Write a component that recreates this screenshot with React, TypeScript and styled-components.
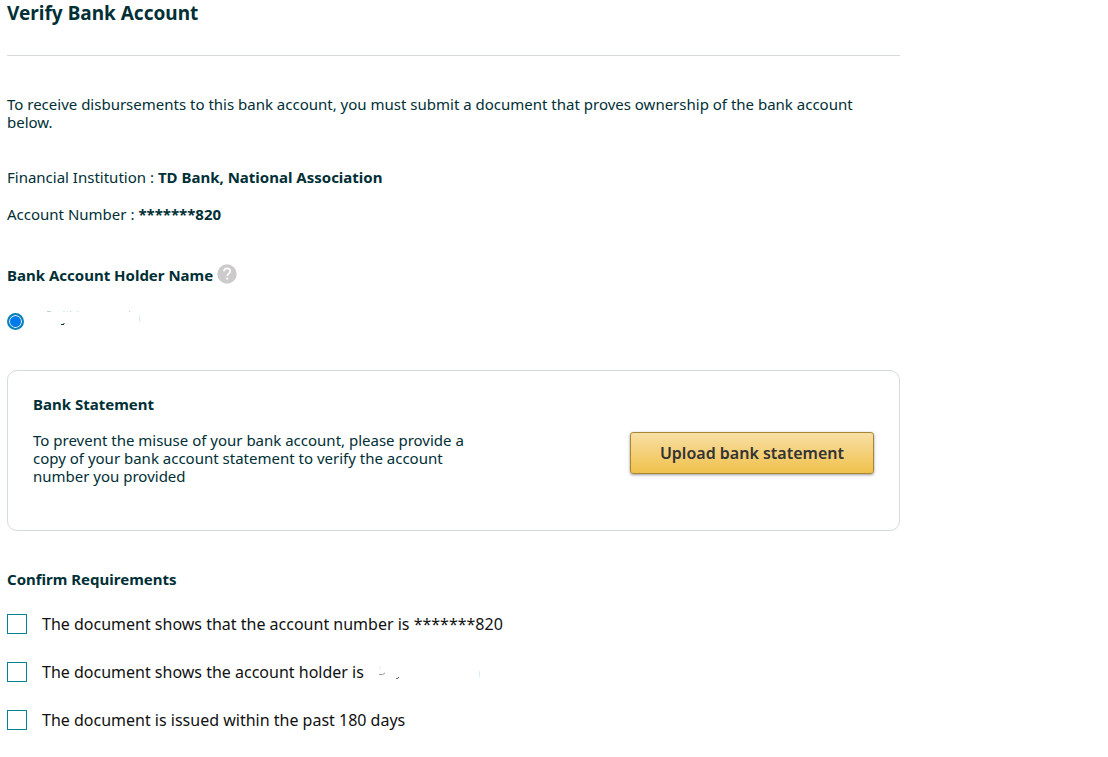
import React from "react";
import styled, { createGlobalStyle } from "styled-components";

const GlobalStyle = createGlobalStyle`
  *, *::before, *::after { box-sizing: border-box; }
  body {
    margin: 0;
    background: #fff;
    color: #002f36;
    font-family: "Noto Sans", "Open Sans", sans-serif;
    font-size: 15px;
    line-height: 18px;
  }
`;

const Page = styled.main`
  max-width: 908px;
  padding: 0 8px 24px 7px;
`;

const Title = styled.h1`
  margin: 0;
  padding: 1px 0 30px;
  border-bottom: 1px solid #d5dbdb;
  font-size: 19px;
  font-weight: 700;
  line-height: 24px;
`;

const Intro = styled.p`
  margin: 39px 0 37px;
`;

const Details = styled.dl`
  display: flex;
  flex-direction: column;
  gap: 19px;
  margin: 0 0 41px;
`;

const Detail = styled.div`
  display: flex;
  gap: 4px;

  dt, dd { margin: 0; }
  dd { font-weight: 700; }
`;

const Heading = styled.h2`
  margin: 0;
  font-size: 15px;
  font-weight: 700;
  line-height: 18px;
`;

const HolderGroup = styled.section`
  margin-bottom: 39px;
`;

const HolderHeading = styled.div`
  display: flex;
  align-items: flex-end;
  gap: 4px;
`;

const HelpButton = styled.button`
  display: flex;
  padding: 0;
  border: 0;
  background: none;
  cursor: pointer;
`;

const HolderOption = styled.label`
  display: flex;
  align-items: center;
  gap: 20px;
  margin-top: 27px;
`;

const Radio = styled.input`
  appearance: none;
  width: 17px;
  height: 17px;
  margin: 0;
  border: 2px solid #0a82b5;
  border-radius: 50%;
  background: #0079ea;
  box-shadow: inset 0 0 0 1px #fff;
`;

const StatementCard = styled.section`
  display: flex;
  align-items: center;
  justify-content: space-between;
  gap: 24px;
  padding: 24px 25px;
  border: 1px solid #d5dbdb;
  border-radius: 10px;
`;

const StatementText = styled.div`
  max-width: 464px;
  padding-bottom: 21px;

  p { margin: 18px 0 0; }
`;

const UploadButton = styled.button`
  flex-shrink: 0;
  height: 42px;
  margin-top: 4px;
  padding: 0 29px;
  border: 1px solid #a88734;
  border-radius: 3px;
  background: linear-gradient(#f7dfa5, #f0c14b);
  box-shadow: 0 1px 3px rgba(0, 0, 0, 0.4);
  color: #333;
  font: 600 16px/20px "Noto Sans", "Open Sans", sans-serif;
  cursor: pointer;
`;

const Requirements = styled.section`
  margin-top: 39px;
`;

const RequirementList = styled.ul`
  display: flex;
  flex-direction: column;
  gap: 24px;
  margin: 24px 0 0;
  padding: 0;
  list-style: none;
`;

const Requirement = styled.label`
  display: flex;
  align-items: center;
  gap: 15px;
  color: #111;
  font-size: 16px;
  line-height: 24px;
`;

const Checkbox = styled.input`
  appearance: none;
  flex-shrink: 0;
  width: 20px;
  height: 20px;
  margin: 0;
  border: 1px solid #008296;
  background: #fff;

  &:checked { background: #008296; }
`;

const RequirementText = styled.span`
  display: flex;
  align-items: center;
  gap: 14px;
`;

function HelpIcon() {
  return (
    <svg width="20" height="20" viewBox="0 0 20 20" aria-hidden="true">
      <circle cx="10" cy="10" r="9.7" fill="#cccaca" />
      <path d="M6.9 7.3C7 5.3 8.3 4.3 10 4.3c1.800 0 3.200 1.100 3.200 2.800 0 2.500-3 2.500-3 4.900" fill="none" stroke="#fff" strokeWidth="1.700" />
      <rect x="9.200" y="13.600" width="1.900" height="1.900" fill="#fff" />
    </svg>
  );
}

function ErasedHolder() {
  return (
    <svg width="100" height="20" viewBox="0 0 100 20" aria-hidden="true">
      <path d="M3 .5h4M26 .5h1M85 .5h1" stroke="#b9d3dc" />
      <path d="M19 .5h2M23 .5h1M33 .5h2M95.500 4v7" stroke="#d9edf5" />
      <path d="M17 13.500h3" stroke="#17333a" />
      <path d="M19 12.500h2" stroke="#6fa9b8" />
    </svg>
  );
}

function ErasedName() {
  return (
    <svg width="104" height="18" viewBox="0 0 104 18" aria-hidden="true">
      <path d="M2 3q-1 2 1 3" stroke="#f0dfd5" fill="none" />
      <path d="M1 11.500q4 1 6-1.500" stroke="#999" fill="none" />
      <path d="M18 15.500h2" stroke="#8a6248" />
      <path d="M20 14.500h1" stroke="#345f79" />
      <path d="M101.500 8v6" stroke="#d6ecfa" />
    </svg>
  );
}

export default function App() {
  return (
    <>
      <GlobalStyle />
      <Page>
        <Title>Verify Bank Account</Title>
        <Intro>
          To receive disbursements to this bank account, you must submit a document that proves
          ownership of the bank account below.
        </Intro>
        <Details>
          <Detail>
            <dt>Financial Institution :</dt>
            <dd>TD Bank, National Association</dd>
          </Detail>
          <Detail>
            <dt>Account Number :</dt>
            <dd>*******820</dd>
          </Detail>
        </Details>
        <HolderGroup>
          <HolderHeading>
            <Heading>Bank Account Holder Name</Heading>
            <HelpButton type="button" aria-label="Help">
              <HelpIcon />
            </HelpButton>
          </HolderHeading>
          <HolderOption>
            <Radio type="radio" name="holder" defaultChecked aria-label="Account holder" />
            <ErasedHolder />
          </HolderOption>
        </HolderGroup>
        <StatementCard>
          <StatementText>
            <Heading>Bank Statement</Heading>
            <p>
              To prevent the misuse of your bank account, please provide a copy of your bank
              account statement to verify the account number you provided
            </p>
          </StatementText>
          <UploadButton type="button">Upload bank statement</UploadButton>
        </StatementCard>
        <Requirements>
          <Heading>Confirm Requirements</Heading>
          <RequirementList>
            <li>
              <Requirement>
                <Checkbox type="checkbox" />
                <RequirementText>The document shows that the account number is *******820</RequirementText>
              </Requirement>
            </li>
            <li>
              <Requirement>
                <Checkbox type="checkbox" />
                <RequirementText>
                  The document shows the account holder is
                  <ErasedName />
                </RequirementText>
              </Requirement>
            </li>
            <li>
              <Requirement>
                <Checkbox type="checkbox" />
                <RequirementText>The document is issued within the past 180 days</RequirementText>
              </Requirement>
            </li>
          </RequirementList>
        </Requirements>
      </Page>
    </>
  );
}
